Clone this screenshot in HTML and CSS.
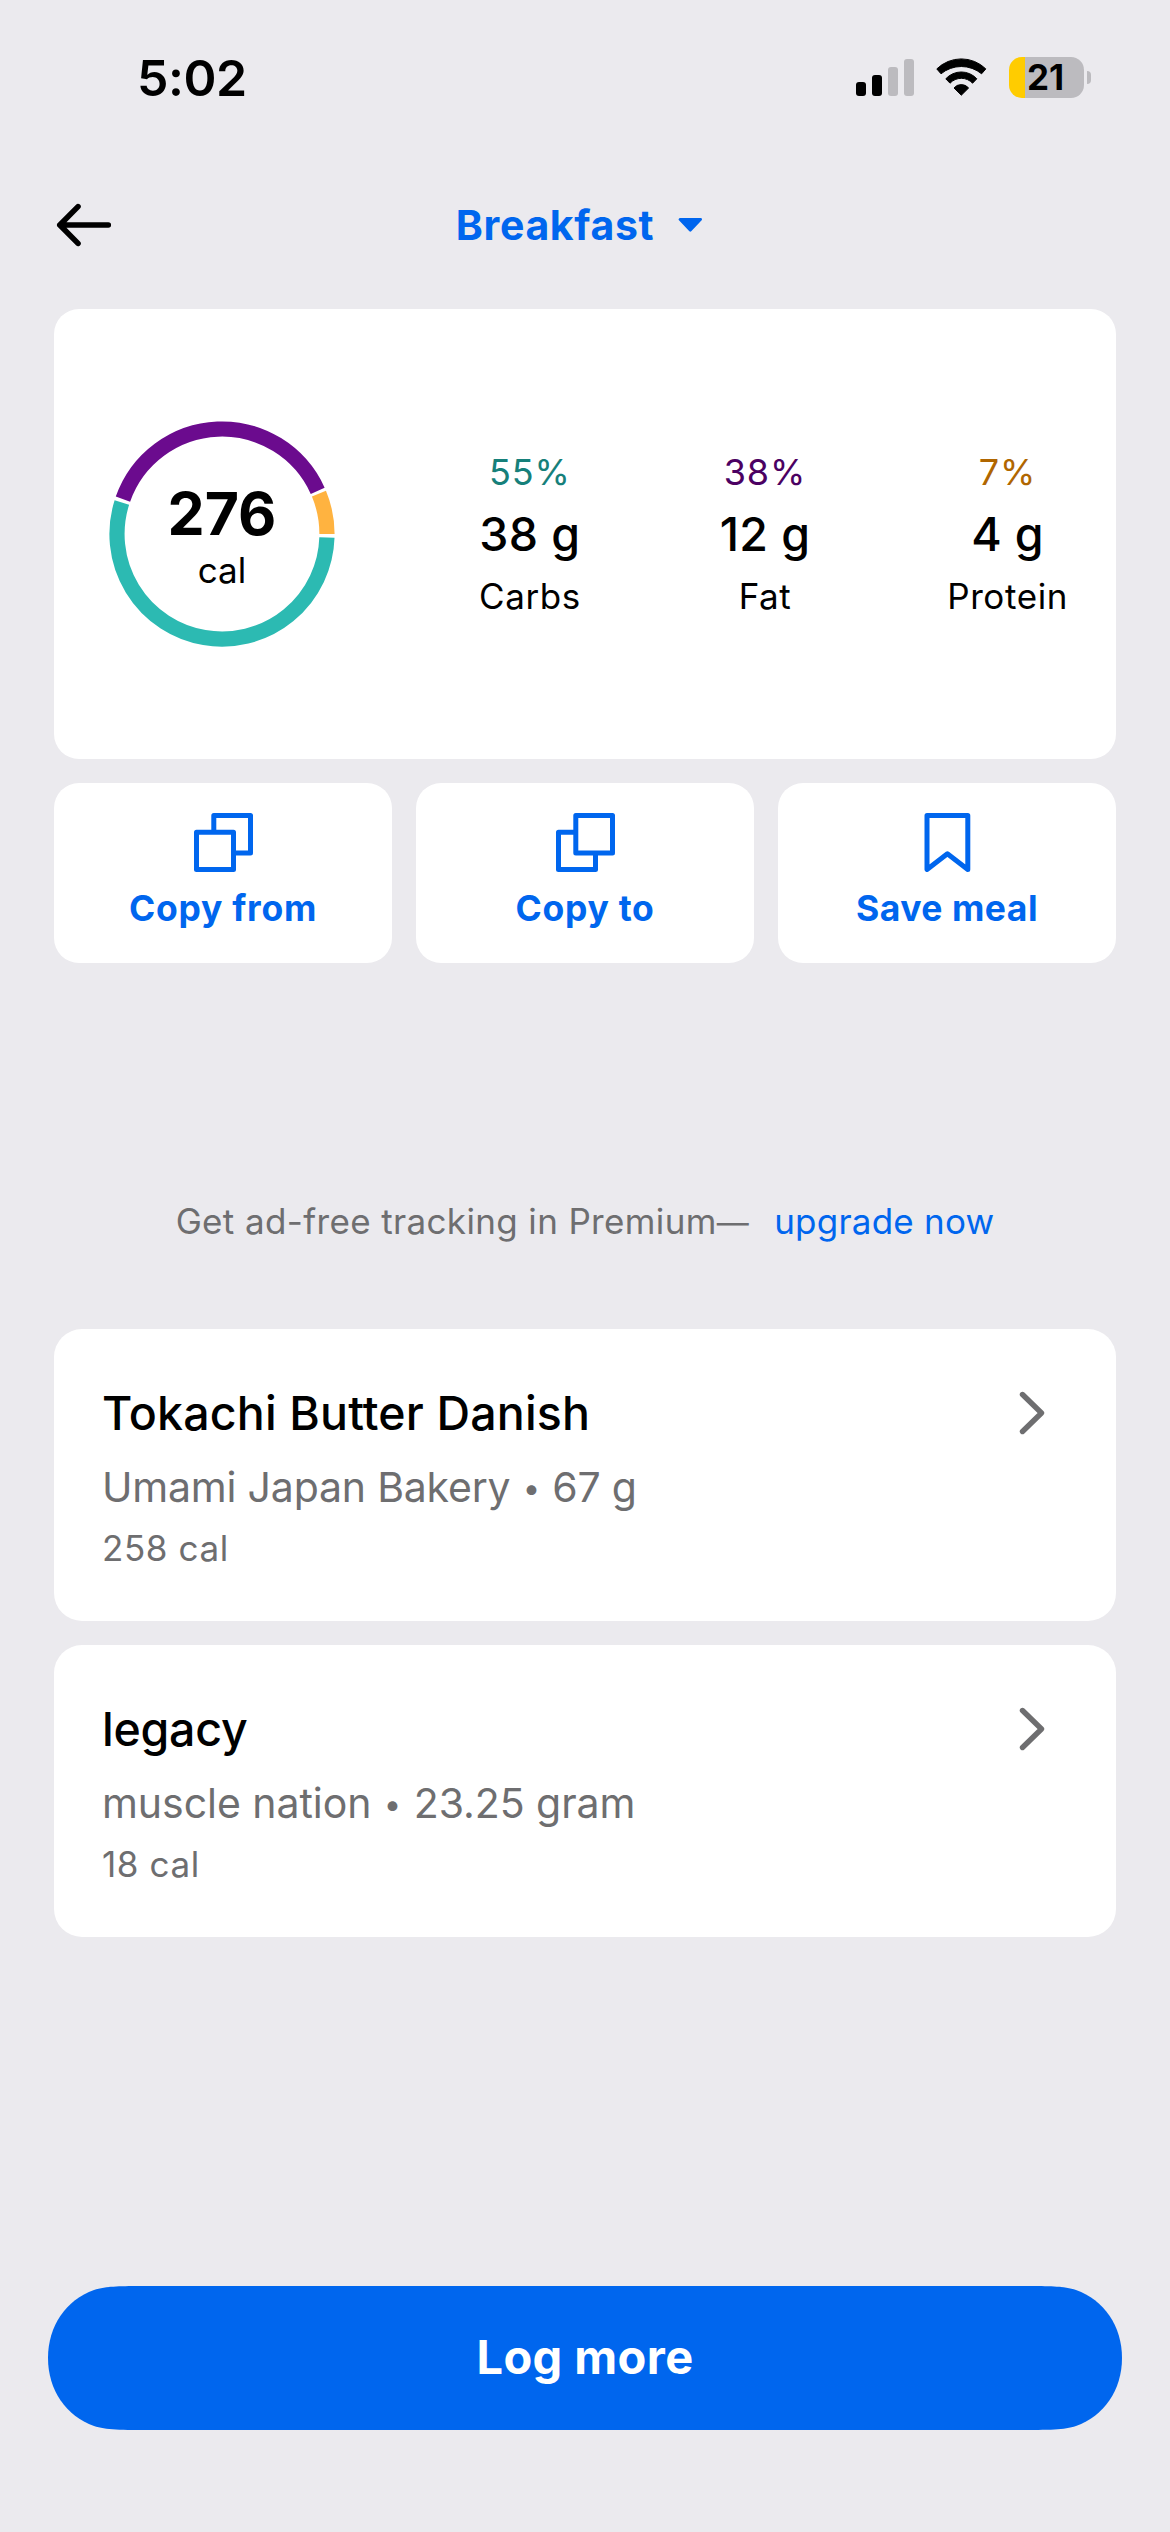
FILE: index.html
```html
<!DOCTYPE html>
<html lang="en">
<head>
<meta charset="utf-8">
<meta name="viewport" content="width=device-width, initial-scale=1">
<title>Breakfast</title>
<link rel="stylesheet" href="styles.css">
</head>
<body>
<div class="screen">
  <div class="status">
    <span class="status-time">5:02</span>
    <div class="status-icons">
      <svg class="signal" width="58" height="41" viewBox="0 0 58 41">
        <rect x="0" y="25" width="10" height="14" rx="3"/>
        <rect x="16" y="18" width="10" height="21" rx="3"/>
        <rect class="off" x="32" y="10" width="10" height="29" rx="3"/>
        <rect class="off" x="48" y="2" width="10" height="37" rx="3"/>
      </svg>
      <svg class="wifi" width="51" height="41" viewBox="0 0 51 41">
        <path d="M.8 11.9A35 35 0 0 1 49.8 11.9L45.6 16.8A31.9 31.9 0 0 0 5 16.8Z"/>
        <path d="M9.8 21.8A21 21 0 0 1 40.8 21.8L36.6 26.2A15.5 15.5 0 0 0 14 26.2Z"/>
        <path d="M18 31A9.5 9.5 0 0 1 32.6 31L25.3 38.2Z"/>
      </svg>
      <div class="battery"><span class="battery-body">21</span><span class="battery-cap"></span></div>
    </div>
  </div>

  <header class="header">
    <svg class="back" width="60" height="48" viewBox="0 0 60 48">
      <path d="M54.3 24H5.8M24 5.6L5.8 24L24 42.4"/>
    </svg>
    <div class="title">
      <span>Breakfast</span>
      <svg width="48" height="24" viewBox="0 0 48 24"><path d="M13.9 6.4H34.7L24.3 17.4Z"/></svg>
    </div>
  </header>

  <main class="content">
    <section class="card summary">
      <div class="ring">
        <svg width="226" height="226" viewBox="0 0 226 226">
          <path class="carbs" d="M217.93 116.48A105 105 0 1 1 12.86 81.43"/>
          <path class="fat" d="M13.96 78.12A105 105 0 0 1 208.69 69.79"/>
          <path class="protein" d="M209.94 72.65A105 105 0 0 1 218 113"/>
        </svg>
        <div class="ring-label">
          <strong>276</strong>
          <span>cal</span>
        </div>
      </div>
      <div class="macros">
        <div class="macro carbs"><span class="pct">55%</span><span class="grams">38 g</span><span class="name">Carbs</span></div>
        <div class="macro fat"><span class="pct">38%</span><span class="grams">12 g</span><span class="name">Fat</span></div>
        <div class="macro protein"><span class="pct">7%</span><span class="grams">4 g</span><span class="name">Protein</span></div>
      </div>
    </section>

    <section class="actions">
      <div class="card action">
        <svg width="59" height="59" viewBox="0 0 59 59">
          <rect x="19.8" y="2.5" width="36.7" height="37.5"/>
          <rect x="2.5" y="19.2" width="37" height="37.3"/>
        </svg>
        <span>Copy from</span>
      </div>
      <div class="card action">
        <svg width="59" height="59" viewBox="0 0 59 59">
          <rect x="2.5" y="19.2" width="37" height="37.3"/>
          <rect x="19.8" y="2.5" width="36.7" height="37.5"/>
        </svg>
        <span>Copy to</span>
      </div>
      <div class="card action">
        <svg width="59" height="59" viewBox="0 0 59 59">
          <path d="M9 2.5H49.8V56.5L29.4 40.8L9 56.5Z"/>
        </svg>
        <span class="save">Save meal</span>
      </div>
    </section>

    <p class="promo"><span>Get ad-free tracking in Premium<span class="dash">—</span></span><a>upgrade now</a></p>

    <section class="foods">
      <article class="card food">
        <div class="food-text">
          <h2>Tokachi Butter Danish</h2>
          <p class="detail">Umami Japan Bakery <span class="dot">•</span> 67 g</p>
          <p class="cal">258 cal</p>
        </div>
        <svg width="30" height="56" viewBox="0 0 30 56"><path d="M5.5 9.5L24.5 28L5.5 46.5"/></svg>
      </article>
      <article class="card food">
        <div class="food-text">
          <h2 class="snug">legacy</h2>
          <p class="detail loose">muscle nation <span class="dot">•</span> 23.25 gram</p>
          <p class="cal">18 cal</p>
        </div>
        <svg width="30" height="56" viewBox="0 0 30 56"><path d="M5.5 9.5L24.5 28L5.5 46.5"/></svg>
      </article>
    </section>
  </main>

  <button class="log">Log more</button>
</div>
</body>
</html>
```
FILE: styles.css
```css
* { box-sizing: border-box; }

body {
  margin: 0;
  background: #ebeaee;
  color: #000;
  font-family: Inter, "Liberation Sans", sans-serif;
}

h2, p { margin: 0; }
svg { display: block; flex: none; }

.screen {
  display: flex;
  flex-direction: column;
  width: 1170px;
  height: 2532px;
  padding-bottom: 102px;
}

/* Status bar */
.status {
  display: flex;
  justify-content: space-between;
  align-items: flex-start;
  height: 150px;
  padding: 48px 79px 0 137px;
}

.status-time {
  font-size: 50px;
  font-weight: 600;
  line-height: 60px;
  letter-spacing: -0.46px;
}

.status-icons {
  display: flex;
  align-items: center;
  gap: 22px;
  padding-top: 9px;
}

.signal .off { fill: #bcbbbf; }
.wifi path { stroke: #000; stroke-width: 1; stroke-linejoin: round; }

.battery { display: flex; align-items: center; gap: 3px; }

.battery-body {
  width: 75px;
  height: 41px;
  padding-left: 18px;
  border-radius: 13px;
  background: linear-gradient(90deg, #fc0 16.5px, #bcbbbf 16.5px);
  font-size: 35px;
  font-weight: 700;
  line-height: 41px;
}

.battery-cap {
  width: 4px;
  height: 13px;
  border-radius: 0 5px 5px 0;
  background: #bcbbbf;
}

/* Header */
.header {
  display: grid;
  grid-template-columns: 1fr auto 1fr;
  align-items: center;
  height: 150px;
  padding: 0 54px;
}

.back { fill: none; stroke: #000; stroke-width: 5.6; stroke-linecap: round; stroke-linejoin: round; }

.title {
  display: flex;
  align-items: center;
  gap: 12px;
  color: #06e;
  font-size: 41px;
  font-weight: 700;
  line-height: 50px;
  letter-spacing: 0.65px;
}

.title path { fill: #06e; stroke: #06e; stroke-width: 2.6; stroke-linejoin: round; }

/* Content */
.content { padding: 9px 54px 0; }
.card { border-radius: 25px; background: #fff; }

.summary {
  display: flex;
  justify-content: space-between;
  align-items: center;
  height: 450px;
  padding: 0 48px 0 55px;
}

.ring { display: grid; place-items: center; }
.ring > * { grid-area: 1 / 1; }
.ring path { fill: none; stroke-width: 15.2; }
.ring .carbs { stroke: #2cbab2; }
.ring .fat { stroke: #6b0b8e; }
.ring .protein { stroke: #ffb340; }

.ring-label {
  display: flex;
  flex-direction: column;
  align-items: center;
  gap: 5px;
  padding-top: 7px;
}

.ring-label strong { font-size: 59px; font-weight: 700; line-height: 60px; }
.ring-label span { font-size: 35px; line-height: 42px; }

.macros { display: flex; justify-content: space-between; width: 589px; }

.macro {
  display: flex;
  flex-direction: column;
  align-items: center;
  gap: 9px;
}

.macro.fat { padding-left: 2px; }
.pct, .name { font-size: 35px; line-height: 48px; }
.pct { font-size: 36px; letter-spacing: 0.9px; }
.name { letter-spacing: 0.6px; }
.grams { font-size: 46.5px; font-weight: 500; line-height: 58px; letter-spacing: 0.4px; }
.carbs .pct { color: #16807a; }
.fat .pct { color: #4b0162; }
.protein .pct { color: #b06600; }

.actions {
  display: grid;
  grid-template-columns: repeat(3, 1fr);
  gap: 24px;
  margin-top: 24px;
}

.action {
  display: flex;
  flex-direction: column;
  align-items: center;
  gap: 16px;
  height: 180px;
  padding-top: 30px;
  color: #06e;
  font-size: 35.5px;
  font-weight: 700;
  line-height: 42px;
  letter-spacing: 0.75px;
}

.action .save { letter-spacing: 0.5px; }
.action svg { fill: #fff; stroke: #06e; stroke-width: 5; stroke-linejoin: round; }

.promo {
  display: flex;
  justify-content: center;
  gap: 25px;
  margin-top: 237px;
  color: #6e6e70;
  font-size: 35px;
  line-height: 42px;
  letter-spacing: 0.36px;
}

.promo a { color: #06e; letter-spacing: 0.22px; }
.promo .dash { font-size: 32px; line-height: 0; }

/* Food list */
.foods { display: flex; flex-direction: column; gap: 24px; margin-top: 87px; }

.food {
  display: flex;
  justify-content: space-between;
  align-items: flex-start;
  height: 292px;
  padding: 56px 69px 0 48px;
  border-radius: 28px;
}

.food h2 { font-size: 46.5px; font-weight: 500; line-height: 56px; letter-spacing: 0.15px; }
.food h2.snug { letter-spacing: -0.24px; }
.food .detail { margin-top: 21px; color: #6e6e70; font-size: 41px; line-height: 50px; letter-spacing: -0.2px; }
.food .detail.loose { letter-spacing: -0.05px; }
.food .dot { margin: 0 1px; font-size: 31px; line-height: 0; vertical-align: 3px; }
.food .cal { margin-top: 15px; color: #6e6e70; font-size: 35px; line-height: 42px; letter-spacing: 0.6px; }
.food svg { fill: none; stroke: #6e6e70; stroke-width: 5.4; stroke-linecap: round; stroke-linejoin: round; }

/* Primary button: capsule with continuous corners */
.log {
  width: 1074px;
  height: 144px;
  margin: auto 48px 0;
  padding: 0 0 3px;
  border: 0;
  background: #06e;
  clip-path: path("M0 72C0 40 18 14 46 4C58 0 72 0 107 0H967C1002 0 1016 0 1028 4C1056 14 1074 40 1074 72C1074 104 1056 130 1028 140C1016 144 1002 144 967 144H107C72 144 58 144 46 140C18 130 0 104 0 72Z");
  color: #fff;
  font: 700 47px/56px Inter, "Liberation Sans", sans-serif;
  letter-spacing: 0.4px;
}
```
